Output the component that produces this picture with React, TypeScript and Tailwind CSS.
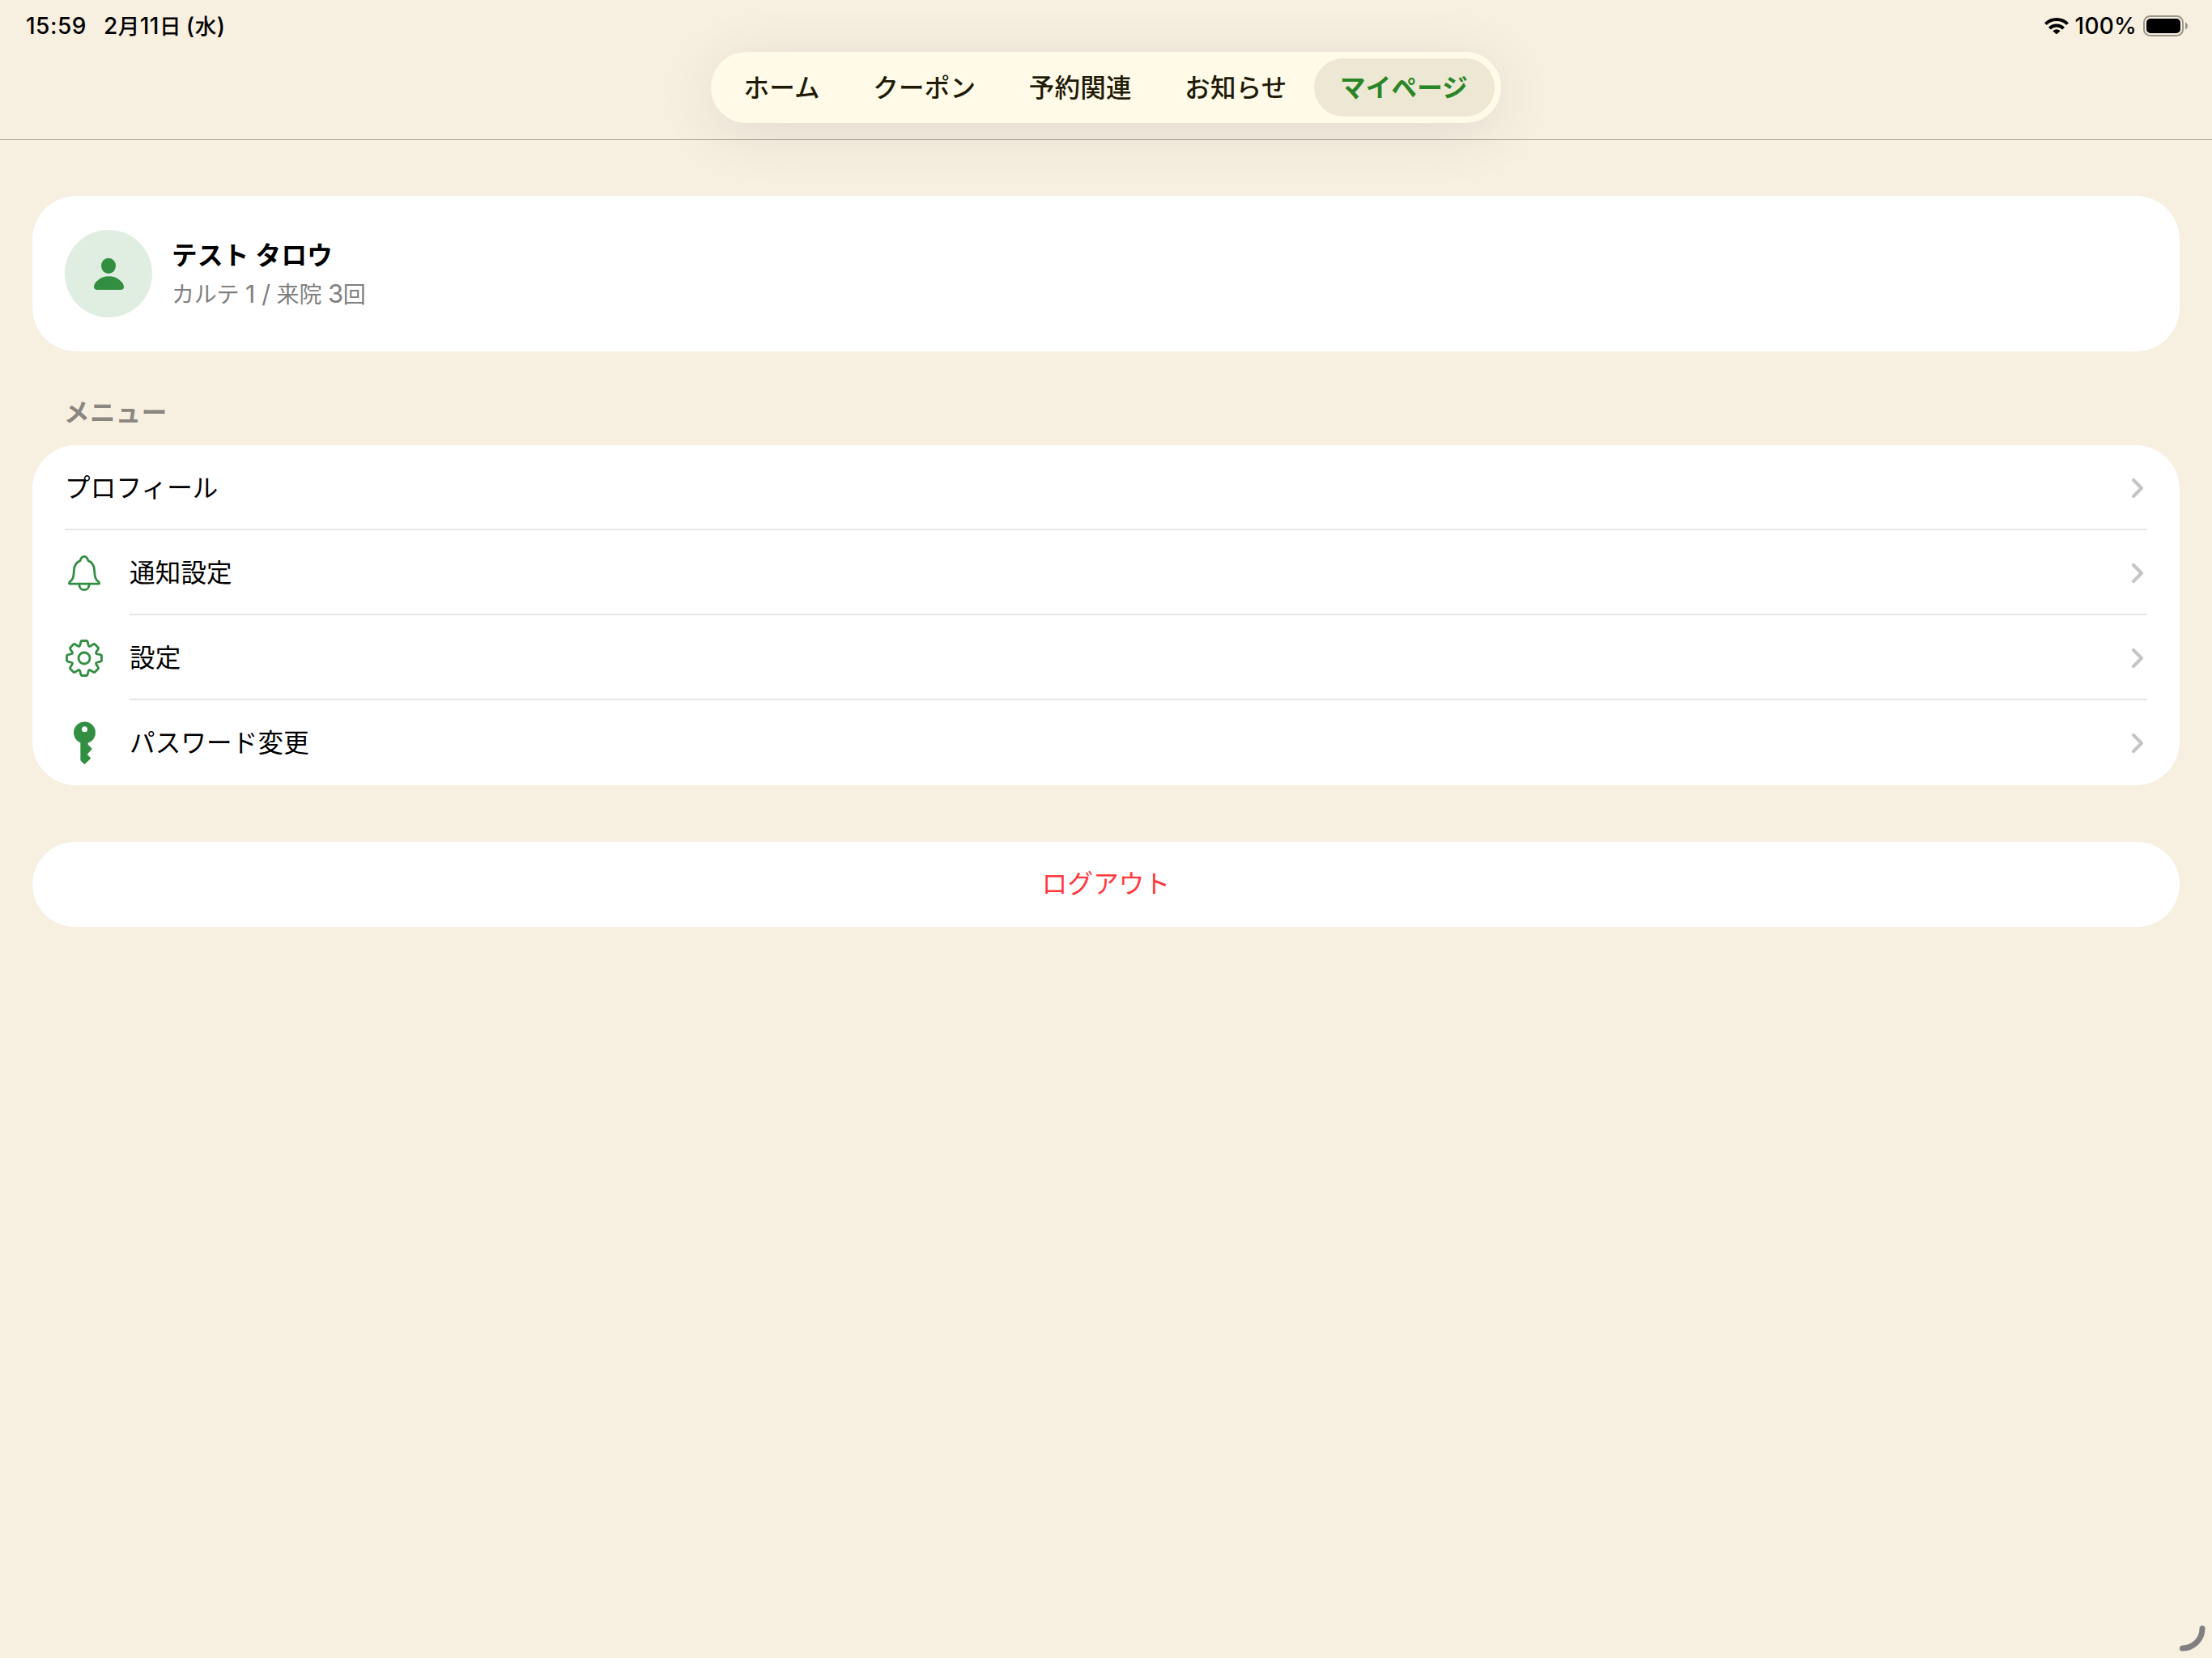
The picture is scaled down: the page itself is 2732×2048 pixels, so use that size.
import type { ReactNode } from "react";
import clsx from "clsx";

interface MenuItem {
  label: string;
  icon?: ReactNode;
}

const BellIcon = () => (
  <svg className="w-12 h-[52px]" viewBox="180 456 144 156" fill="none" stroke="#328e41" strokeWidth="8.400">
    <path
      strokeLinejoin="round"
      d="M237 488C240 478 244 472 252 472S264 478 267 488C283 494 289 506 290 525C291 550 294 556 303 564C310 570 309 573.500 303 573.500H201C195 573.500 194 570 201 564C210 556 213 550 214 525C215 506 221 494 237 488Z"
    />
    <path d="M233.500 575C233.500 588 242 596 252 596S270.500 588 270.500 575" />
  </svg>
);

const GearIcon = () => (
  <svg className="w-12 h-12" viewBox="-24 -24 48 48" fill="none" stroke="#328e41" strokeWidth="2.800">
    {[0, 45, 90, 135, 180, 225, 270, 315].map(angle => (
      <path
        key={angle}
        transform={`rotate(${angle})`}
        strokeLinecap="round"
        d="M-6.100 -14.800Q-5.300 -15.100 -5 -16.500L-4.300 -19.600Q-4 -21.500 -2.600 -21.500H2.600Q4 -21.500 4.300 -19.600L5 -16.500Q5.300 -15.100 6.100 -14.800"
      />
    ))}
    <circle r="7" />
  </svg>
);

const KeyIcon = () => (
  <svg className="w-12 h-[54px]" viewBox="180 422 144 162" fill="#328e41">
    <path
      fillRule="evenodd"
      d="M253.500 423.500A40.500 40.500 0 0 1 266 502.500V508L279.500 521.500Q282 524 279.500 526.500L263 545L275 556Q277 558.500 275 561L255.500 579.500Q253 582 250.500 579.500L240 569Q238 567 238 564V501.500A40.500 40.500 0 0 1 253.500 423.500ZM253.500 440.500A10.500 10.500 0 1 0 253.500 461.500A10.500 10.500 0 1 0 253.500 440.500Z"
    />
  </svg>
);

const PersonIcon = () => (
  <svg className="w-[108px] h-[108px]" viewBox="180 192 324 324" fill="#328e41">
    <ellipse cx="342" cy="325" rx="27" ry="29" />
    <path d="M288 403C288 388 310 364 343 364S399 388 399 403Q399 414 387 414H300Q288 414 288 403Z" />
  </svg>
);

const Chevron = () => (
  <svg className="w-[18px] h-7" viewBox="0 0 18 28" fill="none" stroke="#c5c5c7" strokeWidth="4.200">
    <path strokeLinecap="round" strokeLinejoin="round" d="M4 4L14 14L4 24" />
  </svg>
);

const WifiIcon = () => (
  <svg className="w-[30px] h-5" viewBox="0 0 30 20" fill="none" stroke="black" strokeWidth="4">
    <path d="M1.400 7.700A19.300 19.300 0 0 1 28.600 7.700" />
    <path d="M6.400 13.100A12.300 12.300 0 0 1 23.600 13.100" />
    <path stroke="none" fill="black" d="M10.400 16.200Q15 12.400 19.600 16.200L15.800 19.700Q15 20.300 14.200 19.700Z" />
  </svg>
);

const BatteryIcon = () => (
  <svg className="w-[55px] h-[26px]" viewBox="0 0 55 26">
    <rect x="1" y="1" width="48" height="24" rx="7.500" fill="none" stroke="#99958b" strokeWidth="2" />
    <rect x="4" y="4" width="42" height="18" rx="5" />
    <path d="M52 8.500Q55 10 55 13T52 17.500Z" fill="#99958b" />
  </svg>
);

const tabs = ["ホーム", "クーポン", "予約関連", "お知らせ", "マイページ"];
const activeTab = "マイページ";

const menuItems: MenuItem[] = [
  { label: "プロフィール" },
  { label: "通知設定", icon: <BellIcon /> },
  { label: "設定", icon: <GearIcon /> },
  { label: "パスワード変更", icon: <KeyIcon /> },
];

const StatusBar = () => (
  <div className="flex justify-between h-16 pl-8 pr-[30px] text-[28px] leading-[64px] font-medium text-black">
    <div className="flex gap-[21px] tracking-[0.5px]">
      <span>15:59</span>
      <span className="[word-spacing:-2px]">
        2<span className="text-[26.5px]">月</span>11<span className="text-[26.5px]">日</span> (
        <span className="text-[26.5px]">水</span>)
      </span>
    </div>
    <div className="flex items-center">
      <WifiIcon />
      <span className="ml-2 mr-2 tracking-[0.2px]">100%</span>
      <BatteryIcon />
    </div>
  </div>
);

const TabBar = () => (
  <nav className="flex justify-between mx-auto w-[976px] h-[88px] p-2 rounded-full bg-[#fffbe8] shadow-[0_12px_76px_rgba(0,0,0,0.09)]">
    {tabs.map(tab => (
      <div
        key={tab}
        className={clsx(
          "pl-[32.5px] pr-[33px] rounded-full leading-[73px] whitespace-nowrap",
          tab === activeTab ? "bg-[#ede8d3] font-bold text-[#2a8527]" : "font-medium text-[#1f1b08]"
        )}
      >
        {tab}
      </div>
    ))}
  </nav>
);

const MenuRow = ({ label, icon, last }: MenuItem & { last: boolean }) => (
  <div className="flex h-[105px] px-10">
    {icon && <div className="flex items-center w-20">{icon}</div>}
    <div
      className={clsx(
        "flex flex-1 justify-between items-center pr-[3px]",
        !last && "pt-[3px] border-b-2 border-[#e6e6e6]"
      )}
    >
      <span>{label}</span>
      <Chevron />
    </div>
  </div>
);

export default function App() {
  return (
    <div className="relative overflow-hidden w-[2732px] h-[2048px] bg-[#f7efe0] font-['Inter','Noto_Sans_CJK_JP',sans-serif] text-[31.5px] tracking-[0.2px] text-black">
      <header className="h-[173px] border-b border-[#aca695]">
        <StatusBar />
        <TabBar />
      </header>

      <main className="px-10 pt-[69px]">
        <section className="flex items-center gap-6 h-48 px-10 rounded-[54px] bg-white">
          <div className="rounded-full bg-[#e0ede1]">
            <PersonIcon />
          </div>
          <div className="pt-1">
            <p className="font-bold leading-[47px] tracking-[0.4px]">テスト タロウ</p>
            <p className="text-[28px] leading-[48px] tracking-[-0.2px] text-[#808080]">
              カルテ <span className="text-[30px]">1 /</span> 来院 <span className="text-[31px]">3</span>回
            </p>
          </div>
        </section>

        <h2 className="pt-[51px] pl-[39px] h-[116px] font-bold leading-[50px] tracking-[0.4px] text-[#8a8680]">
          メニュー
        </h2>
        <section className="rounded-[54px] bg-white">
          {menuItems.map((item, index) => (
            <MenuRow key={item.label} {...item} last={index === menuItems.length - 1} />
          ))}
        </section>

        <button className="block mt-[70px] pb-[2px] w-full h-[105px] rounded-full bg-white text-[#ff383c]">
          ログアウト
        </button>
      </main>

      {/* corner resize handle */}
      <svg className="absolute right-0 bottom-0 w-[50px] h-[50px]" viewBox="0 0 50 50" fill="none">
        <path d="M38 13.500A24.500 24.500 0 0 1 13.500 38" stroke="#808080" strokeWidth="7" strokeLinecap="round" />
      </svg>
    </div>
  );
}
